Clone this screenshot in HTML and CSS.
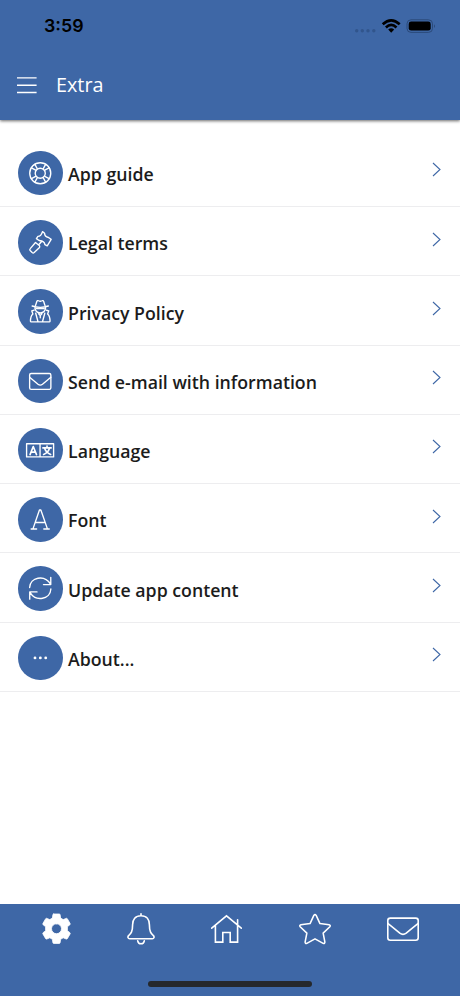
FILE: index.html
```html
<!DOCTYPE html>
<html lang="en">
<head>
<meta charset="utf-8">
<meta name="viewport" content="width=device-width, initial-scale=1">
<title>Extra</title>
<link rel="stylesheet" href="styles.css">
</head>
<body>
<div class="app">
  <header class="header">
    <div class="status">
      <span class="time">3:59</span>
      <svg class="signals" viewBox="0 0 82 20" width="82" height="20" aria-hidden="true">
        <g fill="#31558c"><circle cx="1.7" cy="13.7" r="1.7"/><circle cx="7.3" cy="13.7" r="1.7"/><circle cx="13" cy="13.7" r="1.7"/><circle cx="18.8" cy="13.7" r="1.7"/></g>
        <g fill="none" stroke="#000" stroke-width="2.6"><path d="M27.7 7.3Q36.2-.7 44.7 7.3"/><path d="M30.9 10.5Q36.2 5.4 41.5 10.5"/></g>
        <path d="M33.2 12.6Q36.2 10 39.2 12.6L36.2 15.8Z"/>
        <rect x="52" y="2.8" width="25.5" height="12.6" rx="4" fill="none" stroke="#2b4a7a"/>
        <rect x="53.7" y="4.6" width="22" height="9" rx="2.4"/>
        <path d="M79 7.2q2 1.9 0 3.8z" fill="#2b4a7a"/>
      </svg>
    </div>
    <div class="toolbar">
      <svg class="menu" viewBox="0 0 20 18" width="20" height="18"><path d="M0 1.9h19.6M0 9.2h19.6M0 16.5h19.6" stroke="#fff" stroke-width="1.4"/></svg>
      <h1 class="title">Extra</h1>
    </div>
  </header>

  <main class="list">
    <a class="row">
      <svg class="icon" viewBox="0 0 44 44"><circle cx="22" cy="22" r="10.4"/><circle cx="22" cy="22" r="5"/><path d="M16.7 13.3l2.3 4.2M13.3 16.7l4.2 2.3M27.3 13.3l-2.3 4.2M30.7 16.7l-4.2 2.3M16.7 30.7l2.3-4.2M13.3 27.3l4.2-2.3M27.3 30.7l-2.3-4.2M30.7 27.3l-4.2-2.3"/></svg>
      <span class="label">App guide</span>
      <svg class="chevron" viewBox="0 0 9 15"><path d="M1 1l7 6.5L1 14"/></svg>
    </a>
    <a class="row">
      <svg class="icon" viewBox="0 0 44 44"><path d="M24.2 11.5L26.3 13.1Q26.2 16.4 30.2 17.3L32.8 19.1 28.9 25.6 26.6 24.3Q26.2 20.8 20.9 20.3L18.2 18.4 19.7 16.2Q22.9 16.2 24.2 11.5ZM23.8 20.8l-3.1 3.4M17.3 22.3l4 3.1q.5 1-.3 2l-5 4.8q-1 .8-2 0l-2-2q-.8-1 .1-1.9z"/></svg>
      <span class="label">Legal terms</span>
      <svg class="chevron" viewBox="0 0 9 15"><path d="M1 1l7 6.5L1 14"/></svg>
    </a>
    <a class="row">
      <svg class="icon" viewBox="0 0 44 44"><path d="M17.3 16.4l1.3-4q.5-1.3 1.6-.8l1.8.7 1.8-.7q1.1-.5 1.6.8l1.3 4M14 16.8q8 2.8 16 0M16.7 18.6q.5 4.6 5.3 5.1 4.8-.5 5.3-5.1M18.3 19.3h7.4M15.8 21l-2.2.6 1.1 3.2q-2.3 2-2.4 7 .1.7.8.7h17.8q.7 0 .8-.7-.1-5-2.4-7l1.1-3.2-2.2-.6M17.5 24l2.3 8.4M26.5 24l-2.3 8.4M20.4 24.5L22 26.3l1.6-1.8M22 26.5v2"/></svg>
      <span class="label">Privacy Policy</span>
      <svg class="chevron" viewBox="0 0 9 15"><path d="M1 1l7 6.5L1 14"/></svg>
    </a>
    <a class="row">
      <svg class="icon" viewBox="0 0 44 44"><rect x="11.5" y="14.3" width="21" height="15.7" rx="1.5"/><path d="M11.5 18q4.8 4 8.3 7 2.2 1.7 4.4 0 3.5-3 8.3-7"/></svg>
      <span class="label">Send e-mail with information</span>
      <svg class="chevron" viewBox="0 0 9 15"><path d="M1 1l7 6.5L1 14"/></svg>
    </a>
    <a class="row">
      <svg class="icon" viewBox="0 0 44 44"><path d="M8.5 15.6h26.7v13H8.5zM21.8 15.6v13"/><path class="bold" d="M11.9 26.3l3.2-8 3.2 8M13.1 23.9h4M24.6 19.7h8.2M28.7 17.9v1.8M31.2 20q-1.4 4.3-5.9 6.2M26.2 20q1.6 4.3 6.1 6.2"/></svg>
      <span class="label">Language</span>
      <svg class="chevron" viewBox="0 0 9 15"><path d="M1 1l7 6.5L1 14"/></svg>
    </a>
    <a class="row">
      <svg class="icon" viewBox="0 0 44 44"><path d="M14.8 31.5l6.4-18.7h1.4L29.1 31.5M17 25.2h9.9M13 31.6h5.4M25.5 31.6h5.4"/></svg>
      <span class="label">Font</span>
      <svg class="chevron" viewBox="0 0 9 15"><path d="M1 1l7 6.5L1 14"/></svg>
    </a>
    <a class="row">
      <svg class="icon" viewBox="0 0 44 44"><path d="M11.5 21.3C12 11.2 26 8 32.2 18M32.4 11.2v7.2h-7.2M32.5 22.7C32 32.8 18 36 11.8 26M11.6 32.8v-7.2h7.2"/></svg>
      <span class="label">Update app content</span>
      <svg class="chevron" viewBox="0 0 9 15"><path d="M1 1l7 6.5L1 14"/></svg>
    </a>
    <a class="row">
      <svg class="icon" viewBox="0 0 44 44"><g class="dots"><circle cx="16.8" cy="21.7" r="1.4"/><circle cx="22.1" cy="21.7" r="1.4"/><circle cx="27.4" cy="21.7" r="1.4"/></g></svg>
      <span class="label">About...</span>
      <svg class="chevron" viewBox="0 0 9 15"><path d="M1 1l7 6.5L1 14"/></svg>
    </a>
  </main>

  <footer class="footer">
    <nav class="tabs">
      <svg width="29" height="32" viewBox="0 0 29 32"><path fill="#fff" fill-rule="evenodd" stroke="#fff" stroke-width=".8" d="M11.7.3h5.6q.7 0 .8.7l.5 3.4 2.6 1.5 3-1.2q.7-.3 1.1.3l2.8 4.8q.4.7-.2 1.2l-2.5 2v4l2.5 2q.6.5.2 1.2l-2.8 4.8q-.4.6-1.1.3l-3-1.2-2.6 1.5-.5 3.4q-.1.7-.8.7h-5.6q-.7 0-.8-.7l-.5-3.4-2.6-1.5-3 1.2q-.7.3-1.1-.3L.9 20.2q-.4-.7.2-1.2l2.5-2v-4l-2.5-2q-.6-.5-.2-1.2l2.8-4.8q.4-.6 1.1-.3l3 1.2 2.6-1.5.5-3.4q.1-.7.8-.7zM14.5 10a5 5 0 100 10 5 5 0 100-10z" transform="translate(0 .7)"/></svg>
      <svg width="28" height="32" viewBox="0 0 28 32"><path d="M14 .8v2M14 2.7C8.3 2.7 5.6 6.6 5.6 11.8c0 7-1.7 8.5-3.8 10.6-1.5 1.5-.9 3.3.9 3.3h22.6c1.8 0 2.4-1.8.9-3.3-2.1-2.1-3.8-3.6-3.8-10.6 0-5.2-2.7-9.1-8.4-9.1zM10.7 27.8q.5 3 3.3 3t3.3-3"/></svg>
      <svg width="31" height="32" viewBox="0 0 31 32"><path stroke-linejoin="miter" d="M.7 15.2L15.5 2.9l14.8 12.3M4.4 12.3v16.8h7.4v-9.6h7.4v9.6h7.4V12.3M26.6 12V6.8"/></svg>
      <svg width="32" height="32" viewBox="0 0 33 32" class="star"><path d="M15.3 2q1.2-1.7 2.4 0l3.9 8.4 9.4 1.3q1.9.5.8 2l-6.9 6.5 1.8 9.3q0 1.9-1.8 1.3l-8.4-4.6-8.4 4.6q-1.8.6-1.8-1.3l1.8-9.3-6.9-6.5q-1.1-1.5.8-2l9.4-1.3z"/></svg>
      <svg width="32" height="32" viewBox="0 0 32 32"><rect x=".8" y="5.1" width="30.4" height="22.2" rx="2.5"/><path d="M.8 10.4q7 5.6 12 9.8 3.2 2.4 6.4 0 5-4.2 12-9.8"/></svg>
    </nav>
    <div class="home-bar"></div>
  </footer>
</div>
</body>
</html>
```
FILE: styles.css
```css
* {
  box-sizing: border-box;
}

body {
  margin: 0;
  background: #fff;
  font-family: "Open Sans", sans-serif;
}

.app {
  display: flex;
  flex-direction: column;
  width: 460px;
  height: 996px;
  overflow: hidden;
}

.header {
  flex: none;
  height: 120px;
  background: #3e67a6;
  box-shadow: 0 1px 3px rgba(0, 0, 0, 0.6);
}

.status {
  display: flex;
  justify-content: space-between;
  align-items: center;
  height: 51px;
  padding: 0 23px 0 44px;
}

.time {
  color: #000;
  font: 600 17.8px/24px Inter, sans-serif;
}

.signals {
  margin-top: 2px;
}

.toolbar {
  display: flex;
  align-items: center;
  gap: 19px;
  height: 67px;
  padding-left: 17px;
}

.title {
  margin: 0;
  color: #fff;
  font-size: 19.8px;
  font-weight: 400;
  line-height: 28px;
}

.list {
  flex: 1;
  padding-top: 17.8px;
}

.row {
  display: flex;
  align-items: center;
  height: 69.25px;
  padding: 0 19px 0 18px;
  border-bottom: 1.5px solid #ededef;
}

.icon {
  flex: none;
  width: 44.5px;
  height: 44.5px;
  margin-top: 2.3px;
  border-radius: 50%;
  background: #3e67a6;
  fill: none;
  stroke: #fff;
  stroke-width: 1.35;
  stroke-linecap: round;
  stroke-linejoin: round;
}

.bold {
  stroke-width: 1.6;
}

.dots {
  fill: #fff;
  stroke: none;
}

.label {
  flex: 1;
  margin: 4.5px 0 0 5.5px;
  color: #1c1c1c;
  font-size: 17.73px;
  font-weight: 600;
  line-height: 24px;
}

.chevron {
  width: 9px;
  height: 15px;
  margin-top: -4.2px;
  fill: none;
  stroke: #3e67a6;
  stroke-width: 1.1;
}

.footer {
  flex: none;
  display: flex;
  flex-direction: column;
  justify-content: space-between;
  align-items: center;
  height: 92.5px;
  padding: 9px 0 9.5px;
  background: #3e67a6;
}

.tabs {
  display: flex;
  justify-content: space-between;
  width: 100%;
  padding: 0 41px 0 42px;
  fill: none;
  stroke: #fff;
  stroke-width: 1.6;
  stroke-linecap: round;
  stroke-linejoin: round;
}

.star {
  margin-left: 1px;
}

.home-bar {
  width: 164px;
  height: 5.5px;
  border-radius: 3px;
  background: #25282c;
}
```
